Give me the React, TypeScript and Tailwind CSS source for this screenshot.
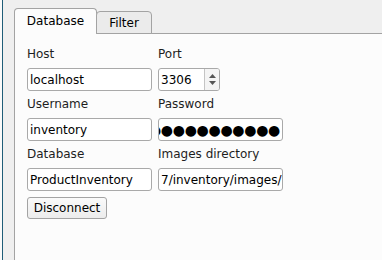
import { useState } from "react";

const Field = ({ label, children }: { label: string; children: React.ReactNode }) => (
  <div className="flex flex-col">
    <div className="h-[22px] leading-[16px] text-[#1e1e1e]">{label}</div>
    {children}
  </div>
);

const inputCls =
  "h-[23px] w-[125px] border border-[#a9a9a9] rounded-[3px] bg-white px-[2px] flex items-center overflow-hidden whitespace-nowrap leading-[16px]";

const App = () => {
  const [tab, setTab] = useState("Database");

  return (
    <div className="w-[382px] h-[260px] overflow-hidden bg-[#efefef] flex font-['DejaVu_Sans',sans-serif] text-[12px] text-black">
      <div className="w-[2px] bg-[#fafafa]" />
      <div className="w-[1px] bg-[#1f5d78]" />
      <div className="w-[11px]" />
      <div className="flex-1 flex flex-col">
        {/* tabs */}
        <div className="h-[34px] flex items-end -mb-px relative z-10">
          <button
            onClick={() => setTab("Database")}
            className="h-[26px] w-[83px] border border-b-0 border-[#a3a3a3] rounded-t-[4px] bg-[#fcfcfc] pb-[5px] leading-[16px] flex items-end justify-center"
          >
            Database
          </button>
          <button
            onClick={() => setTab("Filter")}
            className="h-[23px] w-[56px] -ml-px border border-[#a3a3a3] rounded-t-[4px] bg-[#ebebeb] pb-[2px] leading-[16px] flex items-end justify-center"
          >
            Filter
          </button>
        </div>
        {/* pane */}
        <div className="flex-1 border-l border-t border-[#a3a3a3] bg-[#fcfcfc] pl-[12px] pt-[12px]">
          {tab === "Database" && (
            <div className="flex flex-col gap-[5px]">
              <div className="flex gap-[6px]">
                <Field label="Host">
                  <div className={inputCls}>localhost</div>
                </Field>
                <Field label="Port">
                  <div className="h-[23px] w-[62px] border border-[#a9a9a9] rounded-[3px] bg-white flex overflow-hidden">
                    <div className="flex-1 pl-[2px] flex items-center leading-[16px]">3306</div>
                    <div className="w-[15px] border-l border-[#c4c4c4] bg-[#f4f4f4] flex flex-col items-center justify-center gap-[3px]">
                      <svg width="7" height="4" viewBox="0 0 7 4">
                        <path d="M0 4 L3.5 0 L7 4 Z" fill="#555" />
                      </svg>
                      <svg width="7" height="4" viewBox="0 0 7 4">
                        <path d="M0 0 L3.5 4 L7 0 Z" fill="#555" />
                      </svg>
                    </div>
                  </div>
                </Field>
              </div>
              <div className="flex gap-[6px]">
                <Field label="Username">
                  <div className={inputCls}>inventory</div>
                </Field>
                <Field label="Password">
                  <div className={inputCls + " justify-end text-[14px] tracking-[-0.3px]"}>
                    ●●●●●●●●●●●●●●
                  </div>
                </Field>
              </div>
              <div className="flex gap-[6px]">
                <Field label="Database">
                  <div className={inputCls}>ProductInventory</div>
                </Field>
                <Field label="Images directory">
                  <div className={inputCls}>7/inventory/images/</div>
                </Field>
              </div>
              <div className="pt-px">
                <button className="h-[22px] w-[80px] border border-[#a3a3a3] rounded-[3px] bg-gradient-to-b from-[#fafafa] to-[#ececec] leading-[16px]">
                  Disconnect
                </button>
              </div>
            </div>
          )}
        </div>
      </div>
    </div>
  );
};

export default App;
